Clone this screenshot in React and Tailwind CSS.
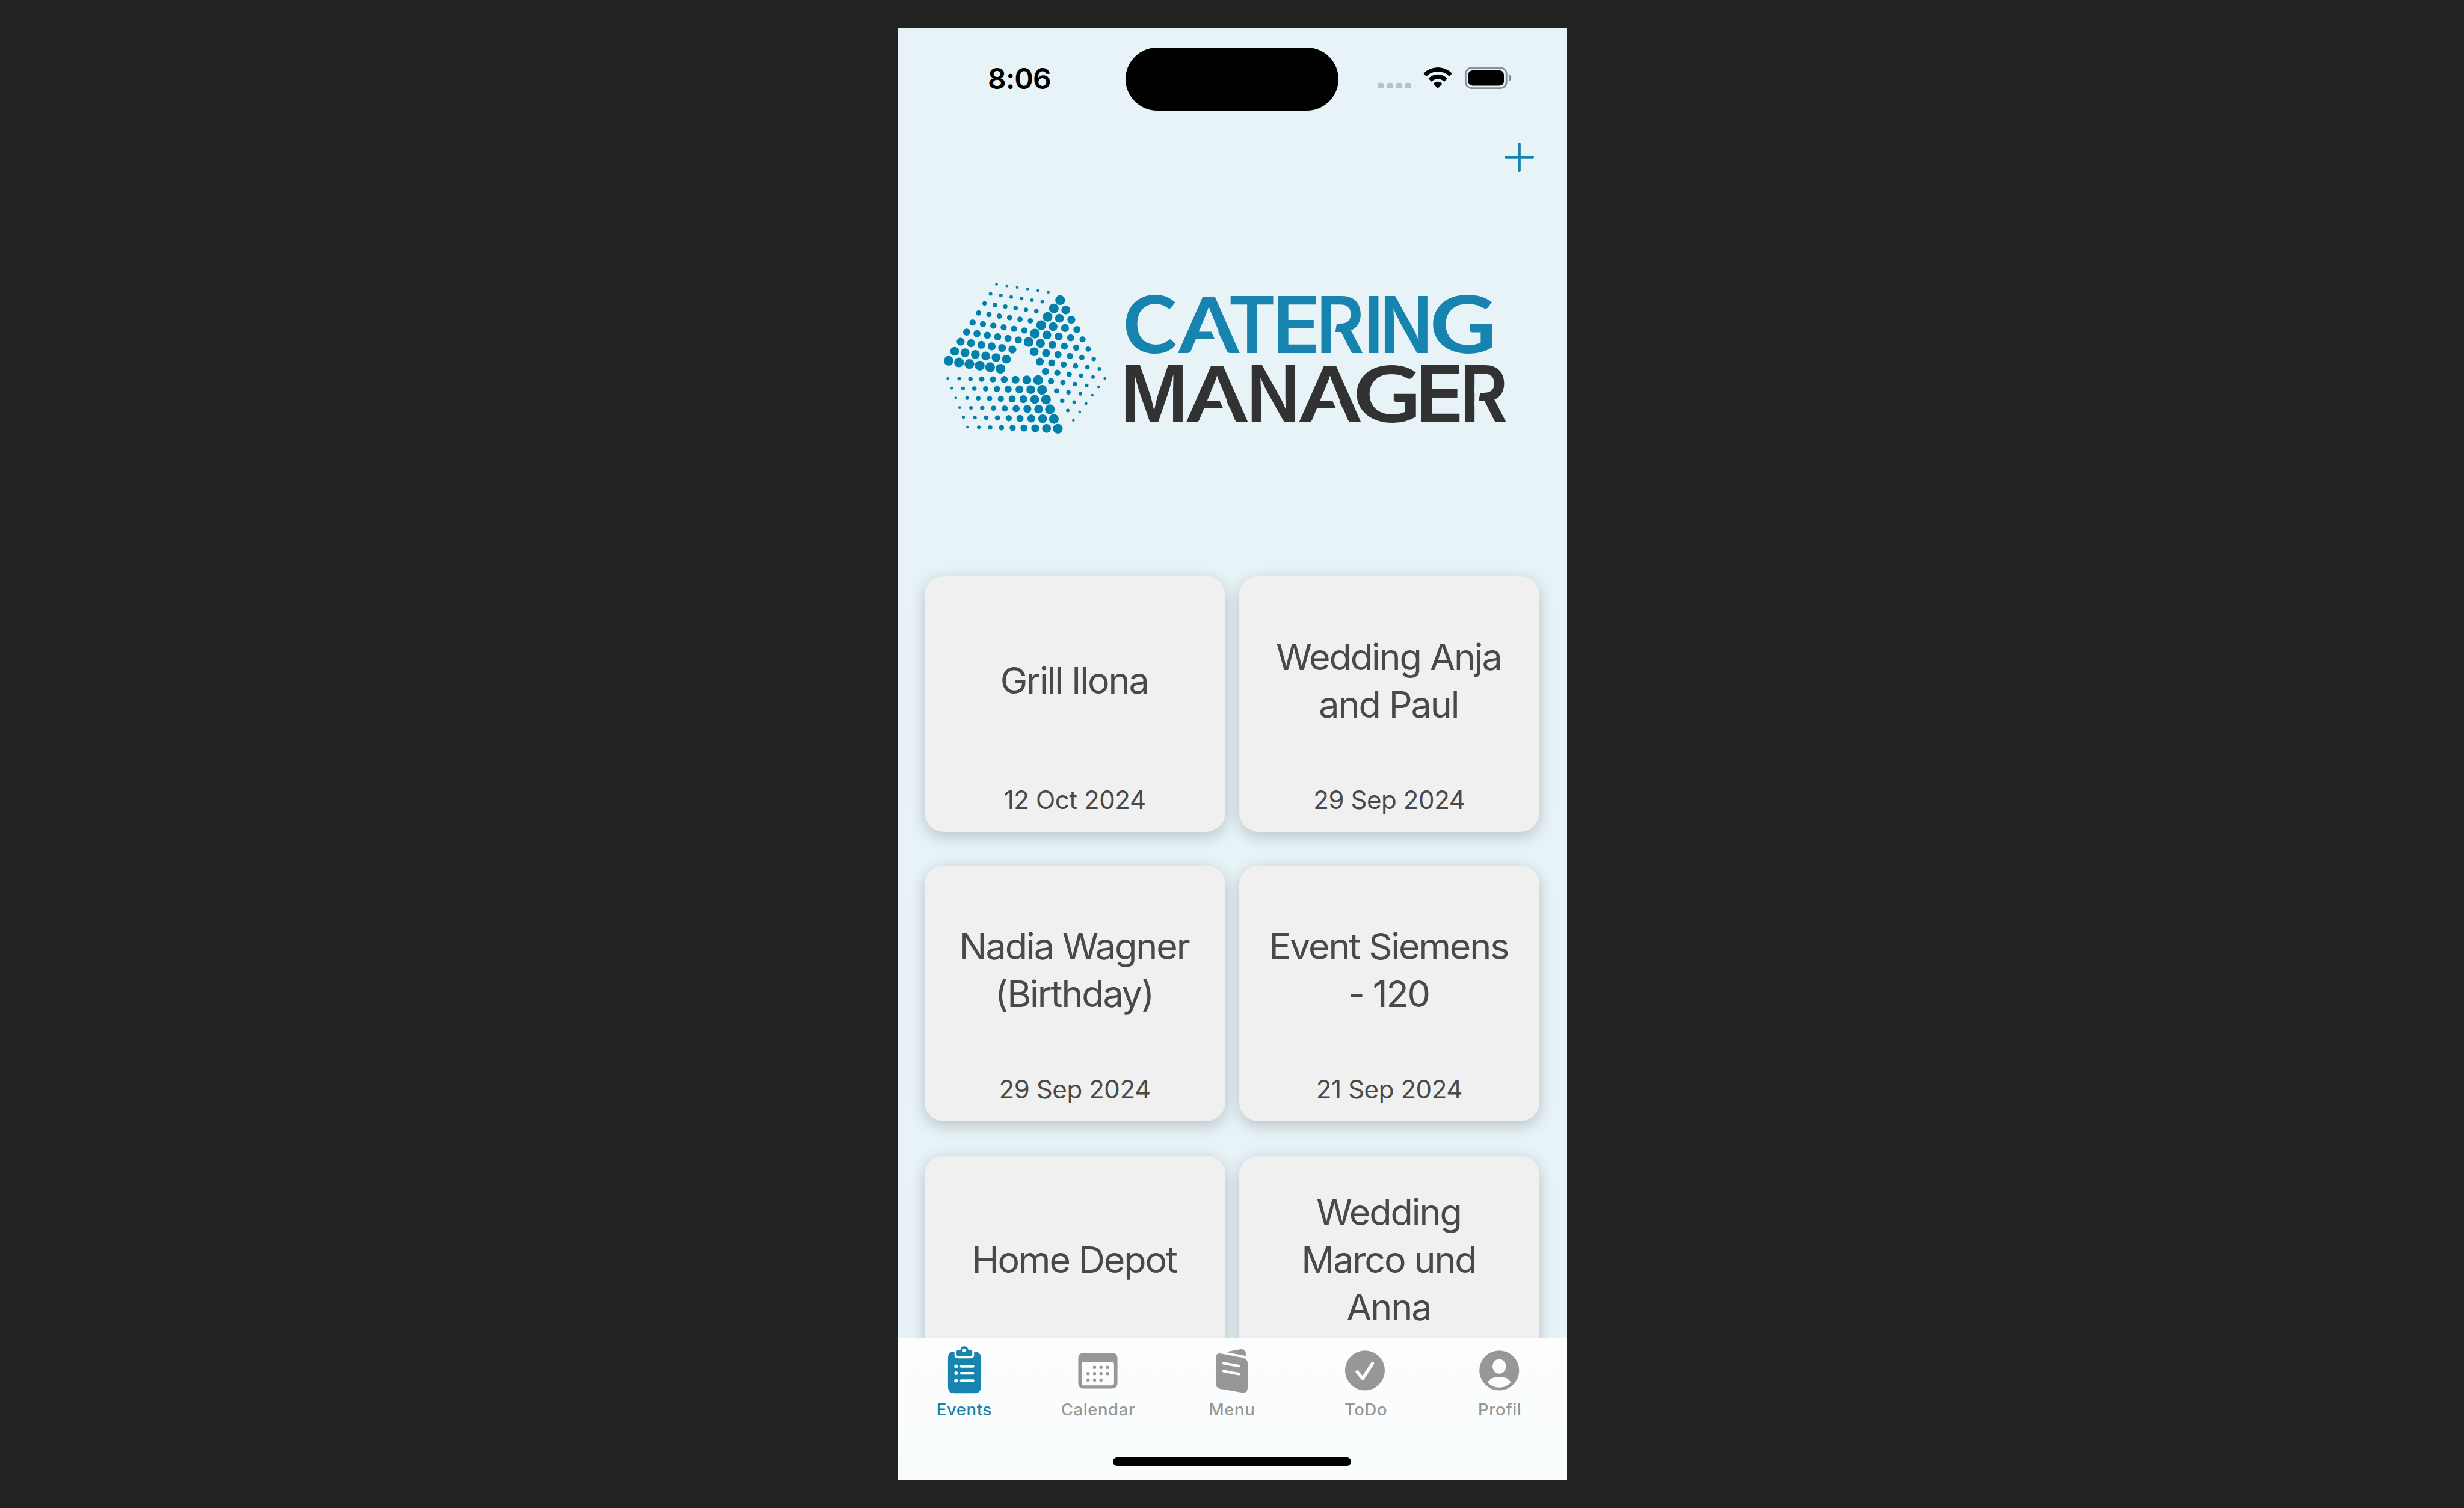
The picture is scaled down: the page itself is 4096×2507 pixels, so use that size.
import React from "react";

const BLUE = "#0080ab";
const PAGE = "#e7f3f7";

function dotGrid(x, y, [rx, ry], rows, [cx, cy], cols, radius) {
  const out = [];
  for (let r = 0; r < rows; r++)
    for (let c = 0; c < cols; c++)
      out.push([x + rx * r + cx * c, y + ry * r + cy * c, radius(r, c)]);
  return out;
}

const SIZES = [7.4, 9.6, 11.8, 14.1, 16.4, 18.7, 20.9, 23.3, 25.8];

const DOTS = [
  ...dotGrid(345, 62, [-31.6, 50.6], 9, [54.7, 8.35], 6, (r) => SIZES[r]),
  ...dotGrid(681, 146, [29.6, 51.75], 9, [-33.3, 44.2], 6, (r) => SIZES[8 - r]),
  ...dotGrid(88, 560, [20.8, 51.35], 6, [59.6, 1.1], 9, (r, c) => SIZES[c]),
];

// Horizontal extent of every letter of the wordmark.
const CATERING = [
  ["C", 1982.5, 2071],
  ["A", 2074.3, 2183.2],
  ["T", 2166.6, 2242.4],
  ["E", 2250.2, 2317.7],
  ["R", 2326.9, 2399.9],
  ["I", 2410.5, 2427.9],
  ["N", 2438.5, 2514.7],
  ["G", 2523.4, 2627.6],
];
const MANAGER = [
  ["M", 1982, 2083],
  ["A", 2089, 2197.9],
  ["N", 2204.3, 2281],
  ["A", 2287.4, 2396.7],
  ["G", 2389.3, 2494],
  ["E", 2502.7, 2570.7],
  ["R", 2579.4, 2652.4],
];

const CAP_HEIGHT = 100.3;
const SANS = { family: "Inter, sans-serif", weight: 600 };
const ROUND = { family: "Lato, sans-serif", weight: 700 };
const FACE = { C: ROUND, A: ROUND, G: ROUND };

const ctx = document.createElement("canvas").getContext("2d");

function measure(ch, face) {
  ctx.font = `${face.weight} 140px ${face.family}`;
  const m = ctx.measureText(ch);
  return { left: -m.actualBoundingBoxLeft, right: m.actualBoundingBoxRight, top: m.actualBoundingBoxAscent };
}

function Letter({ ch, l, r, baseline }) {
  const face = FACE[ch] || SANS;
  const box = measure(ch, face);
  const sx = (r - l) / (box.right - box.left);
  const sy = CAP_HEIGHT / measure("E", face).top;
  const mid = (l + r) / 2;
  const inner = (t) => mid + 9 + ((r - l) / 2 - 9) * (1 - t) - 21;
  return (
    <>
      <text
        transform={`translate(${l - box.left * sx} ${baseline}) scale(${sx} ${sy})`}
        fontFamily={face.family}
        fontWeight={face.weight}
        fontSize="140"
      >
        {ch}
      </text>
      {ch === "A" && (
        <path
          fill={PAGE}
          d={`M${inner(0.46)} ${baseline - 46}L${inner(0.14)} ${baseline - 14}h-12L${inner(0.46) - 12} ${baseline - 46}Z`}
        />
      )}
      {ch === "R" && <path fill={PAGE} d={`M${l + 17.5} ${baseline - 64}h12l-6 34h-6Z`} />}
    </>
  );
}

function Word({ letters, baseline, fill }) {
  return (
    <g fill={fill}>
      {letters.map(([ch, l, r]) => (
        <Letter key={l} ch={ch} l={l} r={r} baseline={baseline} />
      ))}
    </g>
  );
}

function Logo() {
  return (
    <svg viewBox="1640 480 1060 300" className="ml-[56.6px] mt-[145px] block h-[283.2px] w-[1000.6px] shrink-0">
      <g transform="translate(1640 480) scale(0.33333)" fill={BLUE}>
        {DOTS.map(([x, y, r], i) => (
          <circle key={i} cx={x} cy={y} r={r} />
        ))}
      </g>
      <Word letters={CATERING} baseline={621.5} fill="#1684ae" />
      <Word letters={MANAGER} baseline={743.5} fill="#323232" />
    </svg>
  );
}

function StatusBar() {
  return (
    <div className="grid h-[168px] shrink-0 grid-cols-[379px_354px_380px] items-center">
      <div className="pl-[27px] text-center text-[48px] font-semibold leading-none tracking-[-0.9px] text-black">8:06</div>
      <div className="h-[105px] rounded-full bg-black" />
      <svg viewBox="70 80 720 125" className="mb-[3px] ml-[63px] h-[39.3px] w-[226.6px]">
        {[78, 126, 174, 222].map((x) => (
          <rect key={x} x={x} y="168" width="30" height="30" rx="9" fill="#b9c2c6" />
        ))}
        <path d="M319 118 Q352 86 394.500 86 Q437 86 470 118 L456 134 Q429 109 394.500 109 Q360 109 333 134 Z" />
        <path d="M345 146 Q366 124 394.500 124 Q423 124 444 146 L429 162 Q414 148 394.500 148 Q375 148 360 162 Z" />
        <path d="M371 174 Q381 162 394.500 162 Q408 162 418 174 L394.500 198 Z" />
        <rect x="541.5" y="88.500" width="216" height="108" rx="33" fill="none" stroke="#8a9194" strokeWidth="9" />
        <rect x="555" y="102" width="189" height="81" rx="23" />
        <path d="M771 124 Q783 130 783 142 Q783 154 771 160 Z" fill="#838a8d" />
      </svg>
    </div>
  );
}

function Toolbar() {
  return (
    <div className="flex h-[93px] shrink-0 items-center justify-end pr-[54.5px]">
      <svg viewBox="0 0 156 156" className="size-[49px]" stroke="#1684ae" strokeWidth="15" strokeLinecap="round">
        <path d="M78 7.500V148.500M7.500 78H148.500" />
      </svg>
    </div>
  );
}

const EVENTS = [
  { lines: ["Grill Ilona"], date: "12 Oct 2024" },
  { lines: ["Wedding Anja", "and Paul"], date: "29 Sep 2024" },
  { lines: ["Nadia Wagner", "(Birthday)"], date: "29 Sep 2024" },
  { lines: ["Event Siemens", "- 120"], date: "21 Sep 2024" },
  { lines: ["Home Depot"], date: "" },
  { lines: ["Wedding", "Marco und", "Anna"], date: "" },
];

function EventCard({ lines, date }) {
  return (
    <div className="h-[424.8px] rounded-[32px] bg-[#f0f0f0] text-center text-[#494949] shadow-[0_7px_27px_rgba(0,0,0,0.2)]">
      <div className="flex h-[348px] flex-col justify-center pr-[2px] text-[61px] leading-[79.3px] tracking-[-2.1px]">
        {lines.map((line) => (
          <div key={line} className="whitespace-nowrap">{line}</div>
        ))}
      </div>
      <div className="text-[42px] leading-[48px] tracking-[-0.4px]">{date}</div>
    </div>
  );
}

function EventsIcon() {
  return (
    <svg viewBox="23.700 48 300 270" className="h-[85px] w-[94.4px]">
      <path fill="#1684ae" d="M114 89H121V106Q121 125 141 125H206Q225 125 225 106V89H230Q261 92 261 121V276Q261 309 228 309H120Q87 309 87 276V121Q87 92 114 89Z" />
      <path fill="#1684ae" d="M132 88Q132 82 139 82H148Q153 81 153 78A21 21 0 0 1 194 78Q194 81 199 82H208Q215 82 215 88V104Q215 112 206 112H141Q132 112 132 104Z" />
      <circle cx="173.500" cy="83" r="10" fill="#fbfdfd" />
      {[167, 204, 243.500].map((y) => (
        <g key={y} fill="#fbfdfd">
          <circle cx="129.500" cy={y} r="9.500" />
          <rect x="150" y={y - 7} width="76" height="14" rx="7" />
        </g>
      ))}
    </svg>
  );
}

const CALENDAR_CELLS = [
  [863, 173], [897, 173], [931, 173],
  [829, 206], [863, 206], [897, 206], [931, 206],
  [829, 239.5], [863, 239.5], [897, 239.5],
];

function CalendarIcon() {
  return (
    <svg viewBox="731.100 48 300 270" className="h-[85px] w-[94.4px]" fill="#969897">
      <path fillRule="evenodd" d="M807 96H954Q984 96 984 126V255Q984 285 954 285H807Q777 285 777 255V126Q777 96 807 96ZM808 144Q795 144 795 157V255Q795 268 808 268H953Q966 268 966 255V157Q966 144 953 144Z" />
      {CALENDAR_CELLS.map(([x, y]) => (
        <rect key={`${x}-${y}`} x={x - 8} y={y - 8} width="16" height="16" rx="3.500" />
      ))}
    </svg>
  );
}

function MenuIcon() {
  return (
    <svg viewBox="28.500 48 300 270" className="h-[85px] w-[94.4px]" fill="#969897">
      <path d="M145 92L220 77Q253 72 252 112Z" />
      <path d="M115 99L232 121Q261 127 261 155V277Q261 309 232 306L115 286Q93 282 93 262V120Q93 97 115 99Z" />
      <path d="M133 151L215 166M133 192L215 208" stroke="#fbfdfd" strokeWidth="14" strokeLinecap="round" />
    </svg>
  );
}

function TodoIcon() {
  return (
    <svg viewBox="735.900 48 300 270" className="h-[85px] w-[94.4px]">
      <circle cx="882" cy="189" r="105" fill="#969897" />
      <path d="M841 197L870 232L922 152" fill="none" stroke="#fbfdfd" strokeWidth="17" strokeLinecap="round" strokeLinejoin="round" />
    </svg>
  );
}

function ProfileIcon() {
  return (
    <svg viewBox="0 0 300 270" className="h-[85px] w-[94.4px]">
      <circle cx="147" cy="141" r="105" fill="#969897" />
      <ellipse cx="147" cy="119.500" rx="35.500" ry="38.500" fill="#fbfdfd" />
      <path d="M85 204Q104 175 147 175Q190 175 209 204Q184 231 147 231Q110 231 85 204Z" fill="#fbfdfd" />
    </svg>
  );
}

const TABS = [
  { label: "Events", Icon: EventsIcon, active: true },
  { label: "Calendar", Icon: CalendarIcon },
  { label: "Menu", Icon: MenuIcon },
  { label: "ToDo", Icon: TodoIcon },
  { label: "Profil", Icon: ProfileIcon },
];

function TabBar() {
  return (
    <div className="flex h-[236px] shrink-0 flex-col border-t border-[#a3a8a9] bg-gradient-to-b from-[#fcfdfd] to-[#f9fcfd]">
      <div className="grid grid-cols-5 pt-[8.500px]">
        {TABS.map(({ label, Icon, active }) => (
          <div key={label} className="flex flex-col items-center">
            <Icon />
            <span className={`mt-[7px] text-[27.500px] font-medium leading-[34px] tracking-[0.6px] ${active ? "text-[#1684ae]" : "text-[#969897]"}`}>
              {label}
            </span>
          </div>
        ))}
      </div>
      <div className="mx-auto mb-[22.700px] mt-auto h-[14px] w-[396.500px] rounded-full bg-black" />
    </div>
  );
}

export default function App() {
  return (
    <div className="h-[2507px] w-[4096px] overflow-hidden bg-[#222222] pt-[47px] font-['Inter',sans-serif]">
      <div className="mx-auto flex h-[2413px] w-[1113px] flex-col overflow-hidden bg-[#e7f3f7]">
        <div className="flex min-h-0 flex-1 flex-col overflow-hidden">
          <StatusBar />
          <Toolbar />
          <Logo />
          <div className="mt-[221.700px] grid shrink-0 grid-cols-2 gap-x-[23px] gap-y-[56.600px] px-[45.300px]">
            {EVENTS.map((event) => (
              <EventCard key={event.lines[0]} {...event} />
            ))}
          </div>
        </div>
        <TabBar />
      </div>
    </div>
  );
}
